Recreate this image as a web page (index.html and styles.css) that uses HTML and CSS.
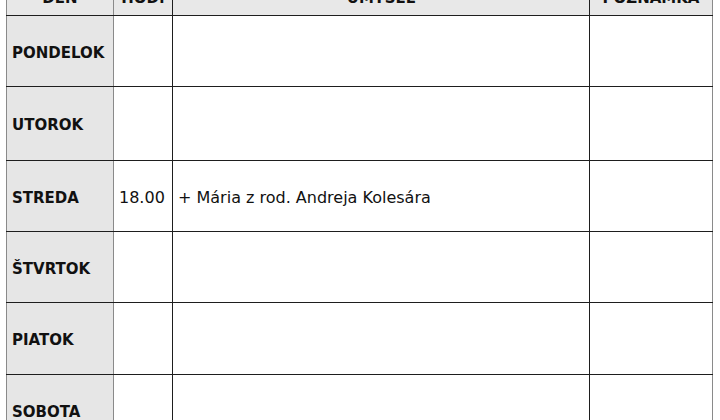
FILE: index.html
```html
<!DOCTYPE html>
<html lang="sk">
<head>
<meta charset="utf-8">
<link rel="stylesheet" href="styles.css">
</head>
<body>
<table class="plan">
  <colgroup>
    <col class="c-day"><col class="c-hod"><col class="c-um"><col class="c-poz">
  </colgroup>
  <thead>
    <tr class="head">
      <th class="day">DEŇ</th><th>HOD.</th><th>ÚMYSEL</th><th class="last">POZNÁMKA</th>
    </tr>
  </thead>
  <tbody>
    <tr class="r1"><td class="day">PONDELOK</td><td></td><td></td><td class="last"></td></tr>
    <tr class="r2"><td class="day">UTOROK</td><td></td><td></td><td class="last"></td></tr>
    <tr class="r3"><td class="day">STREDA</td><td class="hod">18.00</td><td class="um">+ Mária z rod. Andreja Kolesára</td><td class="last"></td></tr>
    <tr class="r4"><td class="day">ŠTVRTOK</td><td></td><td></td><td class="last"></td></tr>
    <tr class="r5"><td class="day">PIATOK</td><td></td><td></td><td class="last"></td></tr>
    <tr class="r6"><td class="day">SOBOTA</td><td></td><td></td><td class="last"></td></tr>
  </tbody>
</table>
</body>
</html>
```
FILE: styles.css
```css
html, body {
  margin: 0;
  padding: 0;
  background: #ffffff;
  overflow: hidden;
}
body {
  font-family: "DejaVu Sans", "Noto Sans", sans-serif;
  color: #111;
}
.plan {
  margin-top: -28px;
  margin-left: 6px;
  width: 706px;
  table-layout: fixed;
  border-collapse: collapse;
}
.c-day { width: 107px; }
.c-hod { width: 59px; }
.c-um { width: 417px; }
.c-poz { width: 123px; }

.plan th, .plan td {
  border: 1px solid #1e1e1e;
  padding: 3px 4px 0;
  vertical-align: middle;
  text-align: left;
  font-size: 16px;
}
.plan th {
  background: #e8e8e8;
  height: 34px;
  text-align: center;
  font-weight: bold;
  font-size: 15px;
  vertical-align: bottom;
  padding: 0 4px 8px;
}
.plan .day {
  background: #e6e6e6;
  font-weight: bold;
  font-size: 15px;
  border-left: 1px solid #8a8a8a;
  border-right: 1px solid #8a8a8a;
  padding-left: 5px;
}
.plan th.day {
  background: #e8e8e8;
  padding-left: 4px;
}
.plan .last {
  border-right: 1px solid #8a8a8a;
}
.plan .hod { padding-left: 5px; }
.plan .um { padding-left: 5px; }

.r1 td { height: 67px; }
.r2 td { height: 70px; }
.r3 td { height: 67px; }
.r4 td { height: 67px; }
.r5 td { height: 68px; }
.r6 td { height: 68px; }
```
